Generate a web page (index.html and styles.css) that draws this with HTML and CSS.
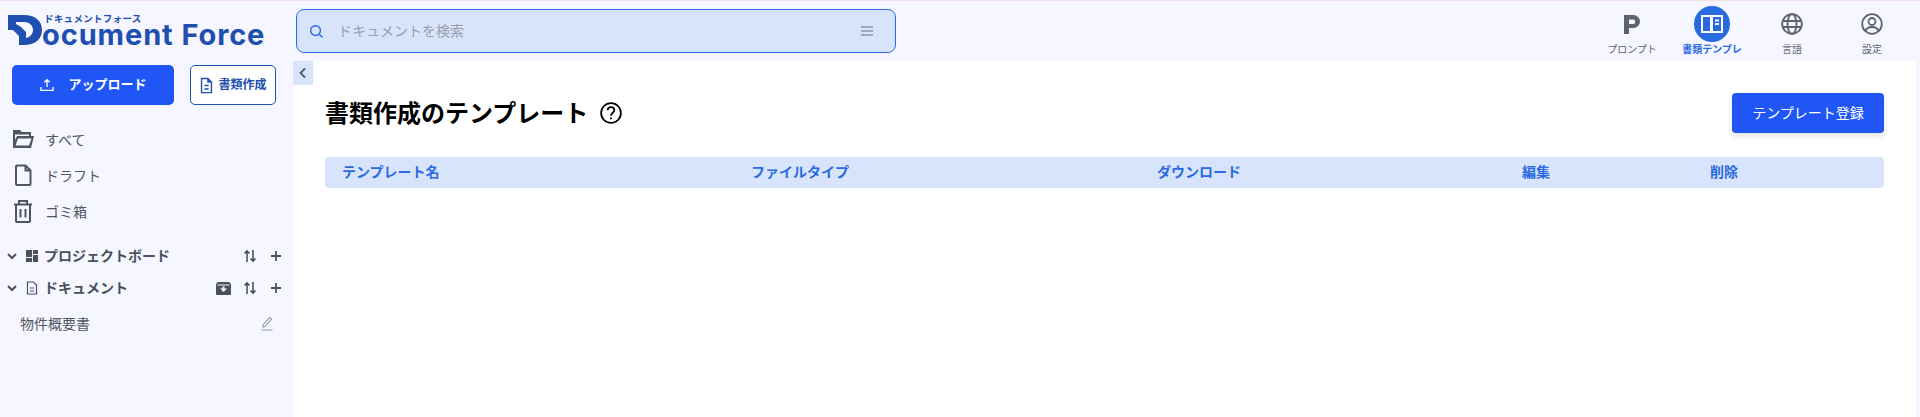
FILE: index.html
```html
<!DOCTYPE html>
<html lang="ja">
    <head>
        <meta charset="UTF-8">
        <title>書類作成のテンプレート</title>
        <link rel="stylesheet" href="styles.css">
    </head>
    <body>
        <div class="app">
            <aside class="sidebar">
                <div class="logo">
                    <svg class="logo-mark" width="34" height="30" viewBox="0 0 34 30">
                        <path fill="#1f4fb0" fill-rule="evenodd" d="M0 0H16C27 0 34 6 34 15S27 30 16 30H11V21L5 15H0zM8 7V9L13 12 18 17V23C22 22 25 19 25 15 25 10 21 7 16 7z"/>
                    </svg>
                    <div class="logo-text">
                        <span class="logo-kana">ドキュメントフォース</span>
                        <span class="logo-name">ocument Force</span>
                    </div>
                </div>

                <div class="actions">
                    <button class="btn-upload">
                        <svg width="16" height="16" viewBox="0 0 24 24" fill="none" stroke="currentColor" stroke-width="2"><path d="M3 15v5h18v-5M12 15V5M8 8l4-4 4 4"/></svg>
                        <span class="btn-label">アップロード</span>
                    </button>
                    <button class="btn-create">
                        <svg width="15" height="17" viewBox="0 0 20 24" fill="none" stroke="currentColor" stroke-width="2"><path d="M3 2h9l5 5v15H3zM12 2v5h5M7 12h6M7 17h6"/></svg>
                        <span class="btn-label">書類作成</span>
                    </button>
                </div>

                <ul class="menu">
                    <li>
                        <svg width="22" height="22" viewBox="0 0 22 22"><path fill="#4f5561" d="M1 2h7l2 2h9v4h3l-3 12H1z"/><path fill="#f5f6ff" d="M3 6.500V12L5 8h12V6.500zM6 10.500 3.500 17.500H17L19.500 10.500z"/></svg>
                        すべて
                    </li>
                    <li>
                        <svg width="22" height="24" viewBox="0 0 22 24" fill="none" stroke="currentColor" stroke-width="2"><path d="M5 2.500h8.500l5 5V21a1 1 0 0 1-1 1H5a1 1 0 0 1-1-1V3.500a1 1 0 0 1 1-1zM13.500 2.500v5h5"/></svg>
                        ドラフト
                    </li>
                    <li>
                        <svg width="22" height="24" viewBox="0 0 22 24" fill="none" stroke="currentColor" stroke-width="2"><path d="M2 5.500h18M7 5.500V2h8v3.500M4 5.500V22a1 1 0 0 0 1 1h12a1 1 0 0 0 1-1V5.500M8.500 10v8.500M13.500 10v8.500"/></svg>
                        ゴミ箱
                    </li>
                </ul>

                <div class="tree-row first">
                    <svg class="chevron" width="12" height="12" viewBox="0 0 12 12" fill="none" stroke="currentColor" stroke-width="2"><path d="M2 4l4 4 4-4"/></svg>
                    <svg width="14" height="14" viewBox="0 0 14 14" fill="currentColor"><path d="M1 1h6v7H1zM8 1h5v4H8zM8 6h5v7H8zM1 9h6v4H1z"/></svg>
                    <span class="tree-title">プロジェクトボード</span>
                    <svg class="sort" width="14" height="14" viewBox="0 0 14 14" fill="none" stroke="currentColor" stroke-width="1.600"><path d="M4 13V2M1.500 4.500L4 2l2.500 2.500M10 1v11M7.500 9.500L10 12l2.500-2.500"/></svg>
                    <svg class="plus" width="14" height="14" viewBox="0 0 14 14" fill="none" stroke="currentColor" stroke-width="1.800"><path d="M7 2v10M2 7h10"/></svg>
                </div>
                <div class="tree-row">
                    <svg class="chevron" width="12" height="12" viewBox="0 0 12 12" fill="none" stroke="currentColor" stroke-width="2"><path d="M2 4l4 4 4-4"/></svg>
                    <svg width="14" height="14" viewBox="0 0 14 14" fill="none" stroke="currentColor" stroke-width="1.200"><path d="M2.500 1h6l3 3v9h-9zM5 7h4M5 10h4"/></svg>
                    <span class="tree-title">ドキュメント</span>
                    <svg class="archive" width="15" height="15" viewBox="0 0 15 15"><path fill="currentColor" d="M2 1h11l2 2v10a1 1 0 0 1-1 1H1a1 1 0 0 1-1-1V3z"/><path fill="#f5f6ff" d="M1.500 3.500h12v1h-12zM6.500 5.500h2v2h2.500L7.500 11 4 7.500h2.500z"/></svg>
                    <svg class="sort" width="14" height="14" viewBox="0 0 14 14" fill="none" stroke="currentColor" stroke-width="1.600"><path d="M4 13V2M1.500 4.500L4 2l2.500 2.500M10 1v11M7.500 9.500L10 12l2.500-2.500"/></svg>
                    <svg class="plus" width="14" height="14" viewBox="0 0 14 14" fill="none" stroke="currentColor" stroke-width="1.800"><path d="M7 2v10M2 7h10"/></svg>
                </div>
                <div class="doc-row">
                    <span>物件概要書</span>
                    <svg width="14" height="16" viewBox="0 0 14 16" fill="none" stroke="#9095a1" stroke-width="1.100"><path d="M3 10l6.500-7.500 2 1.500-6.500 7.500-2 .5zM1.500 15h11"/></svg>
                </div>
            </aside>

            <div class="content">
                <header class="topbar">
                    <div class="search">
                        <svg width="15" height="15" viewBox="0 0 16 16" fill="none" stroke="#2a6ae0" stroke-width="1.500"><circle cx="7" cy="7" r="5.200"/><path d="M11 11l3.500 3.500"/></svg>
                        <span class="search-text">ドキュメントを検索</span>
                        <svg width="14" height="12" viewBox="0 0 14 12" fill="none" stroke="#8f949e" stroke-width="1.300"><path d="M1 2h12M1 6h12M1 10h12"/></svg>
                    </div>
                    <nav class="nav">
                        <div class="nav-item">
                            <div class="nav-icon">
                                <svg width="24" height="24" viewBox="0 0 24 24" fill="#5e636e"><path fill-rule="evenodd" d="M4 3h9.500a6.500 6.500 0 0 1 0 13H9v6H4zM9 7.500V12h4a2.250 2.250 0 0 0 0-4.500z"/></svg>
                            </div>
                            プロンプト
                        </div>
                        <div class="nav-item active">
                            <div class="nav-icon">
                                <svg width="22" height="20" viewBox="0 0 22 20" fill="none" stroke="#fff" stroke-width="2"><path d="M1 2h20v16H1z"/><path d="M9 2h3v16H9z" fill="#fff" stroke="none"/><path d="M14 6.500h4M14 10h4" stroke-width="2"/></svg>
                            </div>
                            書類テンプレ
                        </div>
                        <div class="nav-item">
                            <div class="nav-icon">
                                <svg width="22" height="22" viewBox="0 0 22 22" fill="none" stroke="#5e636e" stroke-width="1.800"><circle cx="11" cy="11" r="9.800"/><ellipse cx="11" cy="11" rx="4.500" ry="9.800"/><path d="M1.500 8h19M1.500 14h19"/></svg>
                            </div>
                            言語
                        </div>
                        <div class="nav-item">
                            <div class="nav-icon">
                                <svg width="22" height="22" viewBox="0 0 22 22" fill="none" stroke="#5e636e" stroke-width="1.800"><circle cx="11" cy="11" r="9.800"/><circle cx="11" cy="8.500" r="3.500"/><path d="M4.500 18c1-3 3.500-4 6.500-4s5.500 1 6.500 4"/></svg>
                            </div>
                            設定
                        </div>
                    </nav>
                </header>

                <main class="panel">
                    <button class="collapse">
                        <svg width="10" height="12" viewBox="0 0 10 12" fill="none" stroke="#555b66" stroke-width="1.800"><path d="M7 1.500L2.500 6 7 10.500"/></svg>
                    </button>
                    <div class="panel-head">
                        <h1>書類作成のテンプレート</h1>
                        <svg class="help" width="22" height="22" viewBox="0 0 20 20" fill="none" stroke="#000" stroke-width="1.600"><circle cx="10" cy="10" r="9"/><path d="M7 7.500C7 5.500 8.500 4.700 10 4.700s3 1 3 2.800c0 2.300-3 2.300-3 5"/><path d="M10 14v1.600"/></svg>
                        <button class="btn-register">テンプレート登録</button>
                    </div>
                    <div class="table-head">
                        <span>テンプレート名</span>
                        <span>ファイルタイプ</span>
                        <span>ダウンロード</span>
                        <span>編集</span>
                        <span>削除</span>
                    </div>
                </main>
            </div>
        </div>
    </body>
</html>
```

FILE: styles.css
```css
/* Reset default styles */
* {
  margin: 0;
  padding: 0;
  box-sizing: border-box;
}

html,
body {
  height: 100%;
  overflow: hidden;
}

body {
  font-family: Inter, 'Noto Sans CJK JP', sans-serif;
  background-color: #f5f6ff;
  color: #4f5561;
  border-top: 1px solid #f3dfe6;
}

button {
  font-family: inherit;
  cursor: pointer;
}

.app {
  display: flex;
  height: 100%;
}

/* Sidebar */
.sidebar {
  width: 293px;
  flex-shrink: 0;
}

.logo {
  display: flex;
  height: 46px;
  padding: 14px 0 0 8px;
}

.logo-mark {
  flex-shrink: 0;
}

.logo-text {
  display: flex;
  flex-direction: column;
  margin-top: -2px;
  color: #1f4fb0;
}

.logo-kana {
  font-size: 9.500px;
  font-weight: 700;
  line-height: 11px;
  margin-left: 2px;
  letter-spacing: 0.300px;
}

.logo-name {
  font-size: 29px;
  font-weight: 700;
  line-height: 22px;
  letter-spacing: 0.900px;
  white-space: nowrap;
}

.actions {
  display: flex;
  gap: 16px;
  padding: 18px 0 0 12px;
}

.btn-upload {
  width: 162px;
  height: 40px;
  display: flex;
  align-items: center;
  justify-content: center;
  gap: 13px;
  background-color: #1f56f5;
  color: #fff;
  border: none;
  border-radius: 5px;
  font-size: 13px;
  font-weight: 700;
}

.btn-create {
  width: 86px;
  height: 40px;
  display: flex;
  align-items: center;
  justify-content: center;
  gap: 4px;
  background-color: #fff;
  color: #1f4fb0;
  border: 1px solid #1f4fb0;
  border-radius: 5px;
  font-size: 12px;
  font-weight: 700;
}

.btn-label {
  margin-bottom: 3px;
}

.menu {
  list-style: none;
  padding: 16px 0 0 12px;
}

.menu li {
  display: flex;
  align-items: center;
  gap: 11px;
  height: 36px;
  font-size: 14px;
}

.tree-row {
  display: flex;
  align-items: center;
  height: 32px;
  padding-left: 6px;
  font-size: 14px;
  font-weight: 700;
  color: #4a505c;
}

.tree-row.first {
  margin-top: 11px;
}

.tree-row .chevron {
  margin-right: 7px;
}

.tree-title {
  margin-left: 5px;
  flex: 1;
  margin-bottom: 2px;
}

.tree-row .archive {
  margin-right: 12px;
}

.tree-row .sort {
  margin-right: 12px;
}

.tree-row .plus {
  margin-right: 10px;
}

.doc-row {
  display: flex;
  align-items: center;
  justify-content: space-between;
  height: 38px;
  padding: 0 19px 0 20px;
  font-size: 14px;
}

/* Top bar */
.content {
  flex: 1;
  display: flex;
  flex-direction: column;
  min-width: 0;
  padding-right: 4px;
}

.topbar {
  height: 60px;
  display: flex;
  justify-content: space-between;
  padding-left: 3px;
  flex-shrink: 0;
}

.search {
  width: 600px;
  height: 44px;
  margin-top: 8px;
  display: flex;
  align-items: center;
  gap: 14px;
  padding: 0 21px 0 12px;
  background-color: #d8e4fc;
  border: 1px solid #2a6ae0;
  border-radius: 8px;
}

.search-text {
  flex: 1;
  font-size: 14px;
  color: #9a9fa8;
  margin-bottom: 2px;
}

.nav {
  display: flex;
  padding-right: 4px;
}

.nav-item {
  width: 80px;
  display: flex;
  flex-direction: column;
  align-items: center;
  padding-top: 5px;
  font-size: 10px;
  line-height: 13px;
  color: #5e636e;
}

.nav-icon {
  width: 36px;
  height: 36px;
  border-radius: 50%;
  display: flex;
  align-items: center;
  justify-content: center;
  margin-bottom: 1px;
}

.nav-item.active {
  color: #2a6ae0;
  font-weight: 700;
}

.nav-item.active .nav-icon {
  background-color: #2a6ae0;
}

/* Main panel */
.panel {
  flex: 1;
  position: relative;
  background-color: #fff;
  padding: 32px 32px 0 32px;
}

.collapse {
  position: absolute;
  top: 0;
  left: 0;
  width: 20px;
  height: 24px;
  display: flex;
  align-items: center;
  justify-content: center;
  background-color: #d8e4fc;
  border: none;
}

.panel-head {
  display: flex;
  align-items: center;
  height: 40px;
}

.panel-head h1 {
  font-size: 24px;
  font-weight: 700;
  color: #000;
  margin-bottom: 4px;
}

.help {
  margin-left: 12px;
  margin-bottom: 1px;
}

.btn-register {
  margin-left: auto;
  width: 152px;
  height: 40px;
  padding-bottom: 3px;
  background-color: #1f56f5;
  color: #fff;
  border: none;
  border-radius: 4px;
  font-size: 14px;
  box-shadow: 0 3px 6px rgba(0, 0, 0, 0.12);
}

.table-head {
  display: grid;
  grid-template-columns: 409px 406px 365px 188px 1fr;
  align-items: center;
  height: 31px;
  margin-top: 24px;
  padding: 0 0 3px 17px;
  background-color: #d8e4fc;
  border-radius: 4px;
  color: #2a6ae0;
  font-size: 14px;
  font-weight: 700;
}
```
